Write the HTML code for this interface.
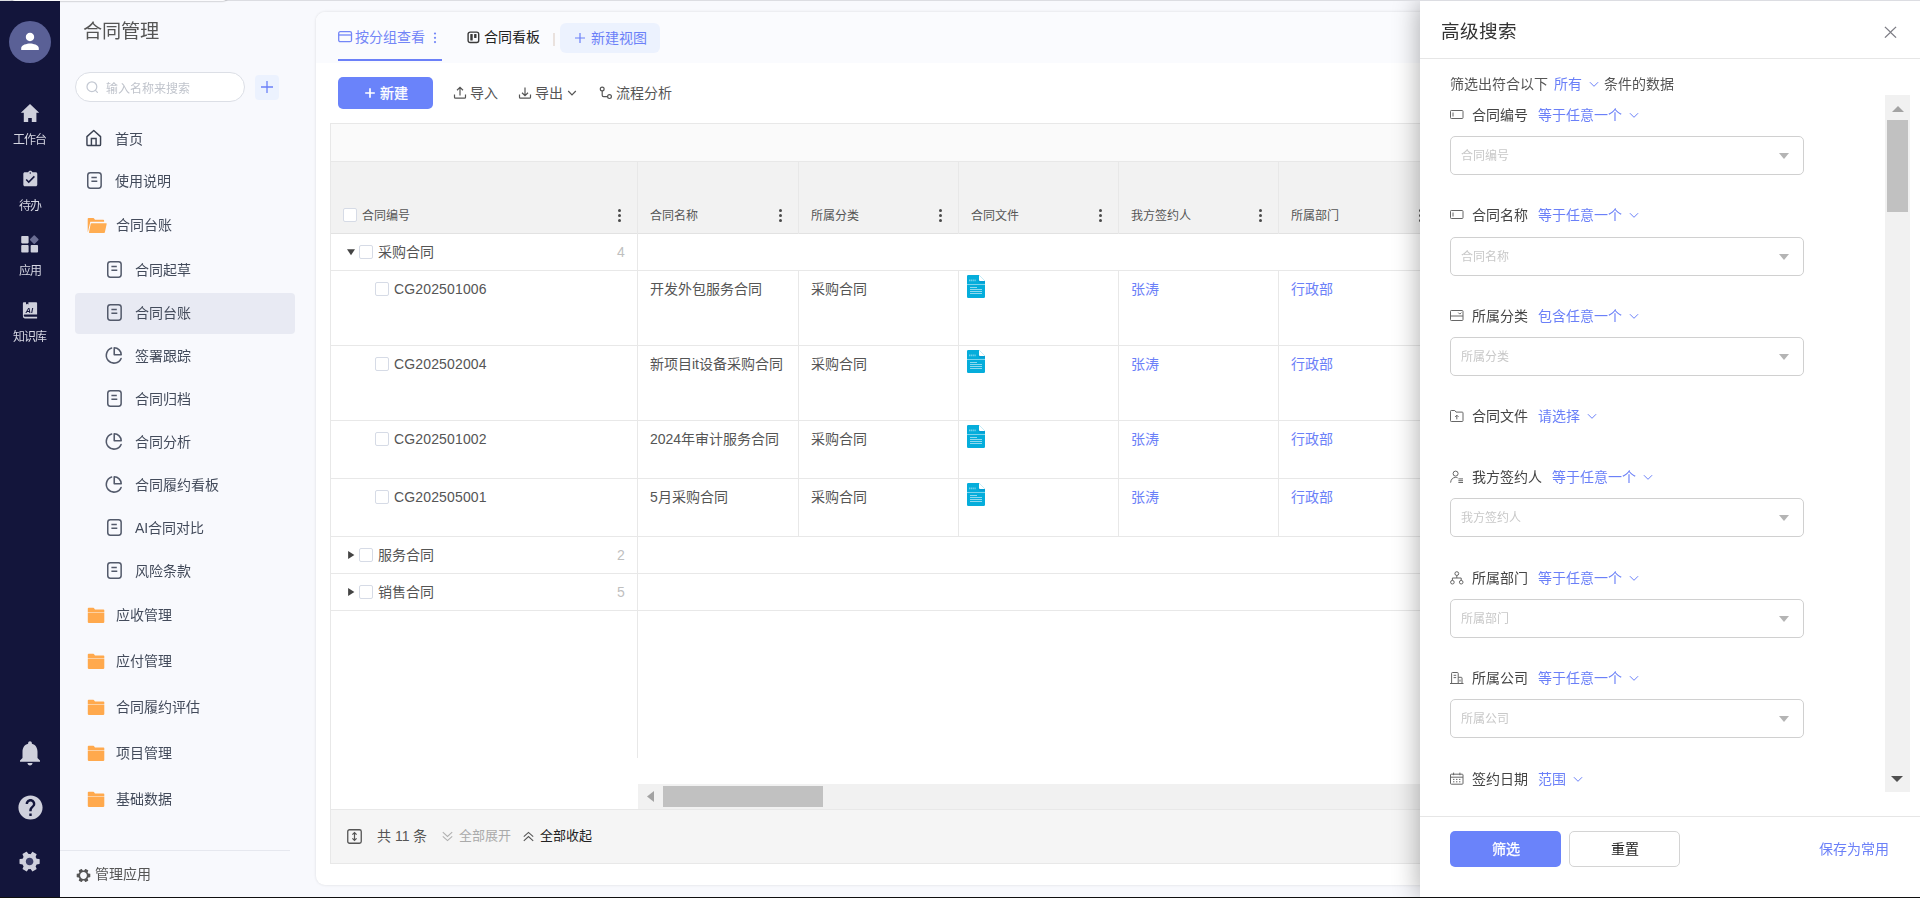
<!DOCTYPE html>
<html lang="zh-CN">
<head>
<meta charset="utf-8">
<title>合同管理</title>
<style>
*{box-sizing:border-box;margin:0;padding:0}
html,body{width:1920px;height:898px;overflow:hidden}
body{font-family:"Liberation Sans",sans-serif;font-size:14px;color:#555;background:#f8f9fd;position:relative}
.abs{position:absolute}
svg{display:block}
/* top / bottom chrome lines */
#topline{left:0;top:0;width:1920px;height:1px;background:#dcdde2}
#toptab{left:10px;top:-7px;width:218px;height:8px;background:#fbfbfd;border-radius:0 0 5px 5px;box-shadow:0 0 2px rgba(0,0,0,.45)}
#botline{left:0;top:897px;width:1920px;height:1px;background:#101010}
/* rail */
#rail,#side,#drawer{will-change:transform}
#rail{left:0;top:1px;width:60px;height:896px;background:#13153b}
#avatar{left:9px;top:20px;width:42px;height:42px;border-radius:50%;background:#5a6096}
.rl{left:-0.500px;width:60px;text-align:center;color:#d6d7e2;font-size:12px;line-height:14px;letter-spacing:-1px}
/* sidebar */
#side{left:60px;top:1px;width:250px;height:895px;background:#f8f9fd}
#stitle{left:83px;top:18px;font-size:19.2px;line-height:26px;color:#555}
#sbox{left:75px;top:72px;width:170px;height:30px;border:1px solid #dcdfe6;border-radius:15px;background:#fff}
#sbox span{position:absolute;left:30px;top:9px;font-size:12px;line-height:14px;color:#c0c4cc}
#splus{left:255px;top:75px;width:24px;height:25px;border-radius:4px;background:#ecf2fe}
.mi{left:15px;width:220px;height:40px;border-radius:4px}
.mi .t{position:absolute;top:12px;font-size:14px;line-height:16px;color:#434b5b;white-space:nowrap}
.mi svg{position:absolute}
.mi.sel{background:#e8eaf3;height:41px}
#sdiv{left:60px;top:850px;width:230px;height:1px;background:#e6e8ef}
#mgr{left:95px;top:866px;font-size:14px;line-height:16px;color:#555}
/* card */
#card{left:316px;top:12px;width:1620px;height:873px;background:#fff;border-radius:9px;box-shadow:0 0 3px rgba(0,0,0,.12)}
#tabs{left:0;top:0;width:100%;height:51px;background:#fafbfe;border-radius:9px 9px 0 0}

/* tabs */
.blue{color:#6b80f8}
#tab1{left:39px;top:17px;font-size:14px;line-height:16px;color:#7386f7;white-space:nowrap}
#tabul{left:22px;top:47px;width:104px;height:2px;background:#6b80f8}
#tab2{left:168px;top:17px;font-size:14px;line-height:16px;color:#222;white-space:nowrap}
#tsep{left:237px;top:21px;width:1.500px;height:13px;background:#eae2de}
#newview{left:244px;top:11px;width:100px;height:30px;border-radius:6px;background:#ecf2fe}
#newview span{position:absolute;left:31px;top:7px;font-size:14px;line-height:16px;color:#6b80f8;white-space:nowrap}
/* toolbar */
#btnnew{left:22px;top:65px;width:95px;height:32px;border-radius:5px;background:#6a83fa}
#btnnew span{position:absolute;left:42px;top:8px;font-size:14px;line-height:16px;color:#fff;white-space:nowrap;-webkit-text-stroke:.3px #fff}
.tb{top:73px;font-size:14px;line-height:16px;color:#555;white-space:nowrap}
/* table */
#tbl{left:14px;top:111px;width:1606px;height:741px;border-left:1px solid #e8e8e8;border-top:1px solid #e8e8e8;border-bottom:1px solid #e8e8e8;background:#fff}
#tband{left:0;top:0;width:100%;height:38px;background:#fafafa;border-bottom:1px solid #e8e8e8}
#thead{left:0;top:38px;width:100%;height:72px;background:#f2f2f2;border-bottom:1px solid #e2e2e2}
.hl{left:0;width:100%;height:1px;background:#e8e8e8}
.vl{top:38px;width:1px;background:#e8e8e8}
.th{top:85px;font-size:12px;line-height:14px;color:#555;white-space:nowrap}
.dots{top:85px;width:3px;height:13px}
.dots i{position:absolute;left:0;width:3px;height:3px;border-radius:50%;background:#4a4a4a}
.cb{width:14px;height:14px;border:1px solid #d6dbe6;border-radius:2px;background:#fff}
.td{font-size:14px;line-height:16px;color:#555;white-space:nowrap}
.lnk{color:#6b80f8}
.cnt{color:#bfbfbf}
#hscroll{left:307px;top:660px;width:1300px;height:25px;background:#f1f1f1}
#hthumb{left:25px;top:2px;width:160px;height:21px;background:#c1c1c1}
#tfoot{left:0;top:685px;width:100%;height:54px;background:#f5f5f5;border-top:1px solid #e8e8e8}

/* drawer */
#drawer{left:1420px;top:1px;width:500px;height:896px;background:#fff;box-shadow:-2px 0 24px rgba(0,0,0,.3)}
#dtitle{left:21px;top:19px;font-size:18.600px;line-height:24px;color:#333;white-space:nowrap}
#dhl{left:0;top:57px;width:100%;height:1px;background:#e6e6e6}
#dfl{left:0;top:815px;width:100%;height:1px;background:#e6e6e6}
.dt{font-size:14px;line-height:16px;white-space:nowrap;color:#555}
.dl{font-size:14px;line-height:16px;white-space:nowrap;color:#444}
.dinp{left:30px;width:354px;height:39px;border:1px solid #d0d0d0;border-radius:5px;background:#fff}
.dinp span{position:absolute;left:10px;top:12px;font-size:12px;line-height:14px;color:#c8c8c8;white-space:nowrap}
.dinp svg{position:absolute;left:328px;top:16px}
#vscroll{left:465px;top:94px;width:25px;height:697px;background:#f1f1f1}
#vthumb{left:2px;top:25px;width:21px;height:92px;background:#c1c1c1}
#bfilter{-webkit-text-stroke:.3px #fff;left:30px;top:830px;width:111px;height:36px;border-radius:5px;background:#6a83fa;color:#fff;font-size:14px;line-height:36px;text-align:center}
#breset{left:149px;top:830px;width:111px;height:36px;border-radius:5px;border:1px solid #d4d4d4;background:#fff;color:#222;font-size:14px;line-height:34px;text-align:center}
#bsave{left:399px;top:840px;font-size:14px;line-height:16px;color:#6b80f8;white-space:nowrap}
</style>
</head>
<body>
<div id="rail" class="abs">
<div id="avatar" class="abs"><svg class="abs" style="left:9px;top:9px" width="24" height="24" viewBox="0 0 24 24"><path fill="#fff" d="M12 11.2c2.3 0 4.2-1.9 4.2-4.2S14.300 2.800 12 2.800 7.800 4.700 7.800 7s1.900 4.200 4.200 4.200zm0 2.300c-2.900 0-8.800 1.500-8.800 4.400v2.100h17.600v-2.100c0-2.900-5.900-4.400-8.800-4.400z"/></svg></div>
<svg class="abs" style="left:20px;top:102px" width="20" height="20" viewBox="0 0 20 20"><path fill="#cfd0dc" d="M10 .9 19.200 9.700H16.400V19H11.800V15H8.200V19H3.800V9.700H.8z"/></svg>
<div class="rl abs" style="top:132px">工作台</div>
<svg class="abs" style="left:20.800px;top:168.800px" width="18.600" height="18.600" viewBox="0 0 24 24"><path fill="#cfd0dc" d="M19 3h-4.180C14.400 1.840 13.300 1 12 1c-1.300 0-2.400.840-2.820 2H5c-1.100 0-2 .900-2 2v14c0 1.100.900 2 2 2h14c1.100 0 2-.900 2-2V5c0-1.100-.900-2-2-2zm-7 0c.550 0 1 .450 1 1s-.450 1-1 1-1-.450-1-1 .450-1 1-1zm-2 14l-4-4 1.410-1.410L10 14.170l6.590-6.590L18 9l-8 8z"/></svg>
<div class="rl abs" style="top:198px">待办</div>
<svg class="abs" style="left:20px;top:233px" width="20.500" height="20.500" viewBox="0 0 20 20"><rect x="1.200" y="2" width="7.200" height="7.200" rx=".8" fill="#cfd0dc"/><rect x="1.200" y="10.800" width="7.200" height="7.200" rx=".8" fill="#cfd0dc"/><rect x="10.400" y="10.800" width="7.200" height="7.200" rx=".8" fill="#cfd0dc"/><rect x="10.700" y="2.300" width="6.400" height="6.400" rx=".8" transform="rotate(45 13.900 5.500)" fill="#6a6d92"/></svg>
<div class="rl abs" style="top:263px">应用</div>
<svg class="abs" style="left:22px;top:300px" width="16" height="19" viewBox="0 0 16 19"><path fill="#cfd0dc" d="M1.800 1.300H4V3.600L5.200 2.700 6.400 3.600V1.300H14.200a.9.900 0 0 1 .9.900V13.500H2.800a1.100 1.100 0 0 0 0 2.200H15.100V17.500H2.800A2.600 2.600 0 0 1 .9 14.900V2.200a.9.900 0 0 1 .9-.9z"/><text x="3.600" y="11.600" font-family="Liberation Sans, sans-serif" font-size="7.500" font-weight="bold" font-style="italic" fill="#13153b">AI</text></svg>
<div class="rl abs" style="top:329px">知识库</div>
<svg class="abs" style="left:15px;top:737px" width="30" height="30" viewBox="0 0 24 24"><path fill="#cfd0dc" d="M12 22c1.100 0 2-.900 2-2h-4c0 1.100.890 2 2 2zm6-6v-5c0-3.070-1.640-5.640-4.500-6.320V4c0-.830-.670-1.500-1.500-1.500s-1.500.670-1.500 1.500v.680C7.630 5.360 6 7.920 6 11v5l-2 2v1h16v-1l-2-2z"/></svg>
<svg class="abs" style="left:15.500px;top:792px" width="29" height="29" viewBox="0 0 24 24"><path fill="#cfd0dc" d="M12 2C6.480 2 2 6.480 2 12s4.480 10 10 10 10-4.480 10-10S17.520 2 12 2zm1 17h-2v-2h2v2zm2.070-7.750l-.900.920C13.450 12.900 13 13.500 13 15h-2v-.500c0-1.100.450-2.100 1.170-2.830l1.240-1.260c.370-.360.590-.860.590-1.410 0-1.100-.900-2-2-2s-2 .900-2 2H8c0-2.210 1.790-4 4-4s4 1.790 4 4c0 .880-.360 1.680-.930 2.250z"/></svg>
<svg class="abs" style="left:17px;top:848.300px" width="25.200" height="25.200" viewBox="0 0 24 24"><circle cx="12" cy="12" r="4" fill="#3a3d66"/><path fill="#cfd0dc" transform="rotate(90 12 12)" d="M19.140 12.940c.040-.300.060-.610.060-.940 0-.320-.020-.640-.070-.940l2.030-1.580c.180-.140.230-.410.120-.610l-1.920-3.320c-.120-.220-.370-.290-.590-.220l-2.390.960c-.500-.380-1.030-.700-1.620-.940l-.360-2.540c-.040-.240-.240-.410-.480-.410h-3.840c-.240 0-.430.170-.470.410l-.360 2.540c-.590.240-1.130.570-1.620.940l-2.390-.960c-.220-.080-.470 0-.590.220L2.740 8.870c-.120.210-.080.470.120.610l2.030 1.580c-.050.300-.090.630-.090.940s.020.640.070.940l-2.030 1.580c-.180.140-.230.410-.120.610l1.920 3.320c.120.220.370.290.590.220l2.390-.960c.500.380 1.030.700 1.620.940l.360 2.540c.050.240.240.410.480.410h3.840c.240 0 .440-.170.470-.410l.360-2.540c.590-.240 1.130-.560 1.620-.940l2.390.960c.220.080.470 0 .590-.220l1.920-3.320c.120-.220.070-.470-.120-.610l-2.010-1.580zM12 15.600c-1.980 0-3.600-1.620-3.600-3.600s1.620-3.600 3.600-3.600 3.600 1.620 3.600 3.600-1.620 3.600-3.600 3.600z"/></svg>
</div>
<div id="side" class="abs">
<div id="stitle" class="abs" style="left:23px;top:18px">合同管理</div>
<div id="sbox" class="abs" style="left:15px;top:71px"><svg class="abs" style="left:9px;top:7px" width="15" height="15" viewBox="0 0 15 15"><circle cx="6.900" cy="6.700" r="4.900" fill="none" stroke="#c3c8d2" stroke-width="1.200"/><path d="M10.500 10.400 12.400 12.300" stroke="#c3c8d2" stroke-width="1.200" stroke-linecap="round"/></svg><span>输入名称来搜索</span></div>
<div id="splus" class="abs" style="left:195px;top:74px"><svg class="abs" style="left:5px;top:5px" width="14" height="14" viewBox="0 0 14 14"><path d="M1 7H13M7 1V13" stroke="#6b80f8" stroke-width="1.300" fill="none"/></svg></div>
<div class="mi abs" style="top:118px"><svg style="left:10px;top:10px" width="17.500" height="18.500" viewBox="0 0 18 19"><path d="M2 7.800 9 1.600 16 7.800V15.800a1.200 1.200 0 0 1-1.200 1.200H3.200A1.200 1.200 0 0 1 2 15.800z" fill="none" stroke="#3c4353" stroke-width="1.500" stroke-linejoin="round"/><path d="M6.600 17V9.800H11.400V17" fill="none" stroke="#3c4353" stroke-width="1.500"/></svg><span class="t" style="left:40px">首页</span></div>
<div class="mi abs" style="top:160px"><svg style="left:11px;top:10px" width="17" height="19" viewBox="0 0 17 19"><rect x="1.750" y="1.750" width="13.400" height="15.400" rx="2.600" fill="none" stroke="#535a6b" stroke-width="1.500"/><path d="M5.400 6.600H10.800M5.400 10.300H11.300" stroke="#535a6b" stroke-width="1.500" fill="none"/></svg><span class="t" style="left:40px">使用说明</span></div>
<div class="mi abs" style="top:204px"><svg style="left:11px;top:11px" width="22" height="18" viewBox="0 0 22 18"><path d="M1.700 2.700a.8.800 0 0 1 .8-.8H7.300a.8.800 0 0 1 .6.300L9 3.700H17.300a.8.800 0 0 1 .8.800V5.700H4.300L1.900 16.200 1.700 15z" fill="#ffa94d"/><path d="M5.300 7.200H20.200a.5.500 0 0 1 .5.600L18.900 16.300a.8.800 0 0 1-.8.600H3.500a.5.500 0 0 1-.5-.6L4.700 7.700a.6.600 0 0 1 .6-.5z" fill="#ffad52"/></svg><span class="t" style="left:41px">合同台账</span></div>
<div class="mi abs" style="top:249px"><svg style="left:31px;top:10px" width="17" height="19" viewBox="0 0 17 19"><rect x="1.750" y="1.750" width="13.400" height="15.400" rx="2.600" fill="none" stroke="#535a6b" stroke-width="1.500"/><path d="M5.400 6.600H10.800M5.400 10.300H11.300" stroke="#535a6b" stroke-width="1.500" fill="none"/></svg><span class="t" style="left:60px">合同起草</span></div>
<div class="mi abs sel" style="top:292px"><svg style="left:31px;top:10px" width="17" height="19" viewBox="0 0 17 19"><rect x="1.750" y="1.750" width="13.400" height="15.400" rx="2.600" fill="none" stroke="#535a6b" stroke-width="1.500"/><path d="M5.400 6.600H10.800M5.400 10.300H11.300" stroke="#535a6b" stroke-width="1.500" fill="none"/></svg><span class="t" style="left:60px">合同台账</span></div>
<div class="mi abs" style="top:335px"><svg style="left:28.500px;top:9.500px" width="19" height="19" viewBox="0 0 18 18"><path d="M16.200 11.800A7.300 7.300 0 1 1 7.200 2.000" fill="none" stroke="#535a6b" stroke-width="1.500" stroke-linecap="round"/><path d="M9.700 1.700A6.600 6.600 0 0 1 16.300 8.300H9.700z" fill="none" stroke="#535a6b" stroke-width="1.500" stroke-linejoin="round"/></svg><span class="t" style="left:60px">签署跟踪</span></div>
<div class="mi abs" style="top:378px"><svg style="left:31px;top:10px" width="17" height="19" viewBox="0 0 17 19"><rect x="1.750" y="1.750" width="13.400" height="15.400" rx="2.600" fill="none" stroke="#535a6b" stroke-width="1.500"/><path d="M5.400 6.600H10.800M5.400 10.300H11.300" stroke="#535a6b" stroke-width="1.500" fill="none"/></svg><span class="t" style="left:60px">合同归档</span></div>
<div class="mi abs" style="top:421px"><svg style="left:28.500px;top:9.500px" width="19" height="19" viewBox="0 0 18 18"><path d="M16.200 11.800A7.300 7.300 0 1 1 7.200 2.000" fill="none" stroke="#535a6b" stroke-width="1.500" stroke-linecap="round"/><path d="M9.700 1.700A6.600 6.600 0 0 1 16.300 8.300H9.700z" fill="none" stroke="#535a6b" stroke-width="1.500" stroke-linejoin="round"/></svg><span class="t" style="left:60px">合同分析</span></div>
<div class="mi abs" style="top:464px"><svg style="left:28.500px;top:9.500px" width="19" height="19" viewBox="0 0 18 18"><path d="M16.200 11.800A7.300 7.300 0 1 1 7.200 2.000" fill="none" stroke="#535a6b" stroke-width="1.500" stroke-linecap="round"/><path d="M9.700 1.700A6.600 6.600 0 0 1 16.300 8.300H9.700z" fill="none" stroke="#535a6b" stroke-width="1.500" stroke-linejoin="round"/></svg><span class="t" style="left:60px">合同履约看板</span></div>
<div class="mi abs" style="top:507px"><svg style="left:31px;top:10px" width="17" height="19" viewBox="0 0 17 19"><rect x="1.750" y="1.750" width="13.400" height="15.400" rx="2.600" fill="none" stroke="#535a6b" stroke-width="1.500"/><path d="M5.400 6.600H10.800M5.400 10.300H11.300" stroke="#535a6b" stroke-width="1.500" fill="none"/></svg><span class="t" style="left:60px">AI合同对比</span></div>
<div class="mi abs" style="top:550px"><svg style="left:31px;top:10px" width="17" height="19" viewBox="0 0 17 19"><rect x="1.750" y="1.750" width="13.400" height="15.400" rx="2.600" fill="none" stroke="#535a6b" stroke-width="1.500"/><path d="M5.400 6.600H10.800M5.400 10.300H11.300" stroke="#535a6b" stroke-width="1.500" fill="none"/></svg><span class="t" style="left:60px">风险条款</span></div>
<div class="mi abs" style="top:594px"><svg style="left:12px;top:12px" width="18" height="17" viewBox="0 0 18 17"><path d="M.8 1.600a.8.800 0 0 1 .8-.8H6.300a.8.800 0 0 1 .6.300L8 2.500H16.500a.8.800 0 0 1 .8.800V5H.8z" fill="#ffa94d"/><path d="M.8 5.600H17.300V15.100a.8.800 0 0 1-.8.800H1.600a.8.800 0 0 1-.8-.8z" fill="#ffa94d"/></svg><span class="t" style="left:41px">应收管理</span></div>
<div class="mi abs" style="top:640px"><svg style="left:12px;top:12px" width="18" height="17" viewBox="0 0 18 17"><path d="M.8 1.600a.8.800 0 0 1 .8-.8H6.300a.8.800 0 0 1 .6.300L8 2.500H16.500a.8.800 0 0 1 .8.800V5H.8z" fill="#ffa94d"/><path d="M.8 5.600H17.300V15.100a.8.800 0 0 1-.8.800H1.600a.8.800 0 0 1-.8-.8z" fill="#ffa94d"/></svg><span class="t" style="left:41px">应付管理</span></div>
<div class="mi abs" style="top:686px"><svg style="left:12px;top:12px" width="18" height="17" viewBox="0 0 18 17"><path d="M.8 1.600a.8.800 0 0 1 .8-.8H6.300a.8.800 0 0 1 .6.300L8 2.500H16.500a.8.800 0 0 1 .8.800V5H.8z" fill="#ffa94d"/><path d="M.8 5.600H17.300V15.100a.8.800 0 0 1-.8.800H1.600a.8.800 0 0 1-.8-.8z" fill="#ffa94d"/></svg><span class="t" style="left:41px">合同履约评估</span></div>
<div class="mi abs" style="top:732px"><svg style="left:12px;top:12px" width="18" height="17" viewBox="0 0 18 17"><path d="M.8 1.600a.8.800 0 0 1 .8-.8H6.300a.8.800 0 0 1 .6.300L8 2.500H16.500a.8.800 0 0 1 .8.800V5H.8z" fill="#ffa94d"/><path d="M.8 5.600H17.300V15.100a.8.800 0 0 1-.8.800H1.600a.8.800 0 0 1-.8-.8z" fill="#ffa94d"/></svg><span class="t" style="left:41px">项目管理</span></div>
<div class="mi abs" style="top:778px"><svg style="left:12px;top:12px" width="18" height="17" viewBox="0 0 18 17"><path d="M.8 1.600a.8.800 0 0 1 .8-.8H6.300a.8.800 0 0 1 .6.300L8 2.500H16.500a.8.800 0 0 1 .8.800V5H.8z" fill="#ffa94d"/><path d="M.8 5.600H17.300V15.100a.8.800 0 0 1-.8.800H1.600a.8.800 0 0 1-.8-.8z" fill="#ffa94d"/></svg><span class="t" style="left:41px">基础数据</span></div>
<div id="sdiv" class="abs" style="left:0;top:849px"></div>
<svg class="abs" style="left:14.500px;top:865.500px" width="17" height="17" viewBox="0 0 24 24"><path fill="#555" transform="rotate(90 12 12)" d="M19.140 12.940c.040-.300.060-.610.060-.940 0-.320-.020-.640-.070-.940l2.030-1.580c.180-.140.230-.410.120-.610l-1.920-3.320c-.120-.220-.370-.290-.590-.220l-2.390.960c-.500-.380-1.030-.700-1.620-.940l-.360-2.540c-.040-.240-.240-.410-.480-.410h-3.840c-.240 0-.430.170-.470.410l-.360 2.540c-.590.240-1.130.570-1.620.940l-2.390-.960c-.220-.080-.470 0-.590.220L2.740 8.870c-.120.210-.080.470.120.610l2.030 1.580c-.050.300-.090.630-.090.940s.020.640.070.940l-2.030 1.580c-.180.140-.230.410-.120.610l1.920 3.320c.120.220.370.290.590.220l2.390-.960c.500.380 1.030.700 1.620.940l.360 2.540c.050.240.240.410.480.410h3.840c.240 0 .440-.170.470-.410l.360-2.540c.590-.240 1.130-.560 1.620-.940l2.390.960c.220.080.470 0 .590-.220l1.920-3.320c.120-.220.070-.470-.120-.610l-2.010-1.580zM12 16.800c-2.650 0-4.800-2.150-4.800-4.800s2.150-4.800 4.800-4.800 4.800 2.150 4.800 4.800-2.150 4.800-4.800 4.800z"/></svg>
<div id="mgr" class="abs" style="left:35px;top:865px">管理应用</div>
</div>
<div id="card" class="abs"><div id="tabs" class="abs">
<svg class="abs" style="left:22px;top:19px" width="15" height="12" viewBox="0 0 15 12"><rect x=".7" y=".7" width="12.800" height="10" rx="1.500" fill="none" stroke="#7386f7" stroke-width="1.300"/><path d="M.7 4H13.500" stroke="#7386f7" stroke-width="1.300"/></svg>
<div id="tab1" class="abs">按分组查看</div>
<svg class="abs" style="left:117px;top:20px" width="4" height="12" viewBox="0 0 4 12"><circle cx="2" cy="1.500" r="1.100" fill="#7386f7"/><circle cx="2" cy="5.800" r="1.100" fill="#7386f7"/><circle cx="2" cy="10.100" r="1.100" fill="#7386f7"/></svg>
<div id="tabul" class="abs"></div>
<svg class="abs" style="left:150.500px;top:18.500px" width="13" height="13" viewBox="0 0 13 13"><rect x="1.100" y="1.100" width="10.600" height="10.400" rx="2" fill="none" stroke="#3a3a3a" stroke-width="1.400"/><rect x="3.300" y="3" width="2.400" height="6.600" rx=".5" fill="#3a3a3a"/><rect x="7.100" y="3" width="2.400" height="4" rx=".5" fill="#3a3a3a"/></svg>
<div id="tab2" class="abs">合同看板</div>
<div id="tsep" class="abs"></div>
<div id="newview" class="abs"><svg class="abs" style="left:14px;top:9px" width="12" height="12" viewBox="0 0 12 12"><path d="M1 6H11M6 1V11" stroke="#6b80f8" stroke-width="1.200"/></svg><span>新建视图</span></div>
</div>
<div id="btnnew" class="abs"><svg class="abs" style="left:27px;top:11px" width="10" height="10" viewBox="0 0 10 10"><path d="M.2 5H9.800M5 .2V9.800" stroke="#fff" stroke-width="1.700"/></svg><span>新建</span></div>
<svg class="abs" style="left:137px;top:74px" width="14" height="14" viewBox="0 0 14 14"><path d="M1.500 8.500V11.200a1 1 0 0 0 1 1H11.500a1 1 0 0 0 1-1V8.500M7 9.500V1.500M4 4.300 7 1.400 10 4.300" fill="none" stroke="#555" stroke-width="1.200"/></svg>
<div class="tb abs" style="left:154px">导入</div>
<svg class="abs" style="left:202px;top:74px" width="14" height="14" viewBox="0 0 14 14"><path d="M1.500 8.500V11.200a1 1 0 0 0 1 1H11.500a1 1 0 0 0 1-1V8.500M7 1.500V9.500M4 6.700 7 9.600 10 6.700" fill="none" stroke="#555" stroke-width="1.200"/></svg>
<div class="tb abs" style="left:219px">导出</div>
<svg class="abs" style="left:251px;top:77px" width="10" height="8" viewBox="0 0 10 8"><path d="M1.200 2 5 5.800 8.800 2" fill="none" stroke="#555" stroke-width="1.200"/></svg>
<svg class="abs" style="left:283px;top:74px" width="14" height="14" viewBox="0 0 14 14"><circle cx="3.200" cy="3" r="1.900" fill="none" stroke="#555" stroke-width="1.200"/><circle cx="10.500" cy="10.600" r="1.900" fill="none" stroke="#555" stroke-width="1.200"/><path d="M3.200 5V9.200a1.400 1.400 0 0 0 1.400 1.400H8.600" fill="none" stroke="#555" stroke-width="1.200"/></svg>
<div class="tb abs" style="left:300px">流程分析</div>
<div id="tbl" class="abs">
<div id="tband" class="abs"></div><div id="thead" class="abs"></div>
<div class="vl abs" style="left:306px;height:596px"></div>
<div class="vl abs" style="left:467px;height:72px"></div><div class="vl abs" style="left:467px;top:147px;height:266px"></div>
<div class="vl abs" style="left:627px;height:72px"></div><div class="vl abs" style="left:627px;top:147px;height:266px"></div>
<div class="vl abs" style="left:787px;height:72px"></div><div class="vl abs" style="left:787px;top:147px;height:266px"></div>
<div class="vl abs" style="left:947px;height:72px"></div><div class="vl abs" style="left:947px;top:147px;height:266px"></div>
<div class="vl abs" style="left:1107px;height:72px"></div><div class="vl abs" style="left:1107px;top:147px;height:266px"></div>
<div class="cb abs" style="left:12px;top:84px"></div>
<div class="th abs" style="left:31px">合同编号</div>
<div class="th abs" style="left:319px">合同名称</div>
<div class="th abs" style="left:480px">所属分类</div>
<div class="th abs" style="left:640px">合同文件</div>
<div class="th abs" style="left:800px">我方签约人</div>
<div class="th abs" style="left:960px">所属部门</div>
<div class="dots abs" style="left:287px"><i style="top:0"></i><i style="top:5px"></i><i style="top:10px"></i></div>
<div class="dots abs" style="left:448px"><i style="top:0"></i><i style="top:5px"></i><i style="top:10px"></i></div>
<div class="dots abs" style="left:608px"><i style="top:0"></i><i style="top:5px"></i><i style="top:10px"></i></div>
<div class="dots abs" style="left:768px"><i style="top:0"></i><i style="top:5px"></i><i style="top:10px"></i></div>
<div class="dots abs" style="left:928px"><i style="top:0"></i><i style="top:5px"></i><i style="top:10px"></i></div>
<div class="dots abs" style="left:1088px"><i style="top:0"></i><i style="top:5px"></i><i style="top:10px"></i></div>
<div class="hl abs" style="top:146px"></div>
<div class="hl abs" style="top:221px"></div>
<div class="hl abs" style="top:296px"></div>
<div class="hl abs" style="top:354px"></div>
<div class="hl abs" style="top:412px"></div>
<div class="hl abs" style="top:449px"></div>
<div class="hl abs" style="top:486px"></div>
<svg class="abs" style="left:16px;top:125px" width="8" height="6.500" viewBox="0 0 9 7"><path d="M0 0H9L4.500 7z" fill="#444"/></svg><div class="cb abs" style="left:28px;top:121px"></div><div class="td abs" style="left:47px;top:120px">采购合同</div><div class="td cnt abs" style="left:286px;top:120px">4</div>
<svg class="abs" style="left:17px;top:427px" width="6.500" height="8" viewBox="0 0 7 9"><path d="M0 0V9L7 4.500z" fill="#444"/></svg><div class="cb abs" style="left:28px;top:424px"></div><div class="td abs" style="left:47px;top:423px">服务合同</div><div class="td cnt abs" style="left:286px;top:423px">2</div>
<svg class="abs" style="left:17px;top:464px" width="6.500" height="8" viewBox="0 0 7 9"><path d="M0 0V9L7 4.500z" fill="#444"/></svg><div class="cb abs" style="left:28px;top:461px"></div><div class="td abs" style="left:47px;top:460px">销售合同</div><div class="td cnt abs" style="left:286px;top:460px">5</div>
<div class="cb abs" style="left:44px;top:158px"></div>
<div class="td abs" style="left:63px;top:157px;letter-spacing:.15px">CG202501006</div>
<div class="td abs" style="left:319px;top:157px">开发外包服务合同</div>
<div class="td abs" style="left:480px;top:157px">采购合同</div>
<svg class="abs" style="left:636px;top:151px" width="18" height="23" viewBox="0 0 18 23"><path d="M1.300 0H12L18 6V21.700a1.300 1.300 0 0 1-1.300 1.300H1.300A1.300 1.300 0 0 1 0 21.700V1.300A1.300 1.300 0 0 1 1.300 0z" fill="#05addb"/><path d="M11.600 5.200a1.200 1.200 0 0 0 1.200 1.200H18V7.600H12.800L11 5.800z" fill="#0a7dc2" opacity=".55"/><path d="M12 0 18 6H13a1 1 0 0 1-1-1z" fill="#fff"/><rect x="0" y="9" width="18" height="1" fill="#7dd4ed"/><rect x="3" y="12" width="7" height="1" fill="#8fd9ef"/><rect x="3" y="14" width="12" height="1" fill="#8fd9ef"/><rect x="3" y="16" width="12" height="1" fill="#8fd9ef"/><rect x="3" y="18" width="12" height="1" fill="#8fd9ef"/><path d="M2 5.400H9" stroke="#6fd0ea" stroke-width="1.600" stroke-dasharray="1.300 .5"/></svg>
<div class="td lnk abs" style="left:800px;top:157px">张涛</div>
<div class="td lnk abs" style="left:960px;top:157px">行政部</div>
<div class="cb abs" style="left:44px;top:233px"></div>
<div class="td abs" style="left:63px;top:232px;letter-spacing:.15px">CG202502004</div>
<div class="td abs" style="left:319px;top:232px">新项目it设备采购合同</div>
<div class="td abs" style="left:480px;top:232px">采购合同</div>
<svg class="abs" style="left:636px;top:226px" width="18" height="23" viewBox="0 0 18 23"><path d="M1.300 0H12L18 6V21.700a1.300 1.300 0 0 1-1.300 1.300H1.300A1.300 1.300 0 0 1 0 21.700V1.300A1.300 1.300 0 0 1 1.300 0z" fill="#05addb"/><path d="M11.600 5.200a1.200 1.200 0 0 0 1.200 1.200H18V7.600H12.800L11 5.800z" fill="#0a7dc2" opacity=".55"/><path d="M12 0 18 6H13a1 1 0 0 1-1-1z" fill="#fff"/><rect x="0" y="9" width="18" height="1" fill="#7dd4ed"/><rect x="3" y="12" width="7" height="1" fill="#8fd9ef"/><rect x="3" y="14" width="12" height="1" fill="#8fd9ef"/><rect x="3" y="16" width="12" height="1" fill="#8fd9ef"/><rect x="3" y="18" width="12" height="1" fill="#8fd9ef"/><path d="M2 5.400H9" stroke="#6fd0ea" stroke-width="1.600" stroke-dasharray="1.300 .5"/></svg>
<div class="td lnk abs" style="left:800px;top:232px">张涛</div>
<div class="td lnk abs" style="left:960px;top:232px">行政部</div>
<div class="cb abs" style="left:44px;top:308px"></div>
<div class="td abs" style="left:63px;top:307px;letter-spacing:.15px">CG202501002</div>
<div class="td abs" style="left:319px;top:307px">2024年审计服务合同</div>
<div class="td abs" style="left:480px;top:307px">采购合同</div>
<svg class="abs" style="left:636px;top:301px" width="18" height="23" viewBox="0 0 18 23"><path d="M1.300 0H12L18 6V21.700a1.300 1.300 0 0 1-1.300 1.300H1.300A1.300 1.300 0 0 1 0 21.700V1.300A1.300 1.300 0 0 1 1.300 0z" fill="#05addb"/><path d="M11.600 5.200a1.200 1.200 0 0 0 1.200 1.200H18V7.600H12.800L11 5.800z" fill="#0a7dc2" opacity=".55"/><path d="M12 0 18 6H13a1 1 0 0 1-1-1z" fill="#fff"/><rect x="0" y="9" width="18" height="1" fill="#7dd4ed"/><rect x="3" y="12" width="7" height="1" fill="#8fd9ef"/><rect x="3" y="14" width="12" height="1" fill="#8fd9ef"/><rect x="3" y="16" width="12" height="1" fill="#8fd9ef"/><rect x="3" y="18" width="12" height="1" fill="#8fd9ef"/><path d="M2 5.400H9" stroke="#6fd0ea" stroke-width="1.600" stroke-dasharray="1.300 .5"/></svg>
<div class="td lnk abs" style="left:800px;top:307px">张涛</div>
<div class="td lnk abs" style="left:960px;top:307px">行政部</div>
<div class="cb abs" style="left:44px;top:366px"></div>
<div class="td abs" style="left:63px;top:365px;letter-spacing:.15px">CG202505001</div>
<div class="td abs" style="left:319px;top:365px">5月采购合同</div>
<div class="td abs" style="left:480px;top:365px">采购合同</div>
<svg class="abs" style="left:636px;top:359px" width="18" height="23" viewBox="0 0 18 23"><path d="M1.300 0H12L18 6V21.700a1.300 1.300 0 0 1-1.300 1.300H1.300A1.300 1.300 0 0 1 0 21.700V1.300A1.300 1.300 0 0 1 1.300 0z" fill="#05addb"/><path d="M11.600 5.200a1.200 1.200 0 0 0 1.200 1.200H18V7.600H12.800L11 5.800z" fill="#0a7dc2" opacity=".55"/><path d="M12 0 18 6H13a1 1 0 0 1-1-1z" fill="#fff"/><rect x="0" y="9" width="18" height="1" fill="#7dd4ed"/><rect x="3" y="12" width="7" height="1" fill="#8fd9ef"/><rect x="3" y="14" width="12" height="1" fill="#8fd9ef"/><rect x="3" y="16" width="12" height="1" fill="#8fd9ef"/><rect x="3" y="18" width="12" height="1" fill="#8fd9ef"/><path d="M2 5.400H9" stroke="#6fd0ea" stroke-width="1.600" stroke-dasharray="1.300 .5"/></svg>
<div class="td lnk abs" style="left:800px;top:365px">张涛</div>
<div class="td lnk abs" style="left:960px;top:365px">行政部</div>
<div id="hscroll" class="abs"><svg class="abs" style="left:9px;top:7px" width="7" height="11" viewBox="0 0 7 11"><path d="M7 0V11L0 5.500z" fill="#a3a3a3"/></svg><div id="hthumb" class="abs"></div></div>
<div id="tfoot" class="abs">
<svg class="abs" style="left:16px;top:19px" width="16" height="16" viewBox="0 0 16 16"><rect x=".75" y=".75" width="13.500" height="13.500" rx="1.800" fill="none" stroke="#555" stroke-width="1.300"/><path d="M7.500 3.600V11.400M5.400 5.600 7.500 3.500 9.600 5.600M5.400 9.400 7.500 11.500 9.600 9.400" fill="none" stroke="#555" stroke-width="1.200"/></svg>
<div class="td abs" style="left:46px;top:18px">共 11 条</div>
<svg class="abs" style="left:111px;top:21px" width="11" height="11" viewBox="0 0 11 11"><path d="M.800 1.200 5.500 5.400 10.200 1.200M.800 5.400 5.500 9.600 10.200 5.400" fill="none" stroke="#b0b0b0" stroke-width="1.100"/></svg>
<div class="abs" style="left:128px;top:18px;font-size:13px;line-height:16px;color:#aaa;white-space:nowrap">全部展开</div>
<svg class="abs" style="left:192px;top:21px" width="11" height="11" viewBox="0 0 11 11"><path d="M.800 5.600 5.500 1.400 10.200 5.600M.800 9.800 5.500 5.600 10.200 9.800" fill="none" stroke="#555" stroke-width="1.100"/></svg>
<div class="abs" style="left:209px;top:18px;font-size:13px;line-height:16px;color:#222;white-space:nowrap">全部收起</div>
</div>
</div>
</div>
<div id="drawer" class="abs">
<div id="dtitle" class="abs">高级搜索</div>
<svg class="abs" style="left:463.500px;top:24.500px" width="13" height="12.500" viewBox="0 0 14 14" preserveAspectRatio="none"><path d="M1 1 13 13M13 1 1 13" stroke="#7c7c84" stroke-width="1.400"/></svg>
<div id="dhl" class="abs"></div>
<div class="dt abs" style="left:30px;top:75px">筛选出符合以下</div>
<div class="dt abs" style="left:134px;top:75px;color:#6b80f8">所有</div>
<svg class="abs" style="left:169px;top:80px" width="10" height="7" viewBox="0 0 10 7"><path d="M.9 1.200 5 5.300 9.100 1.200" fill="none" stroke="#6b80f8" stroke-width="1"/></svg>
<div class="dt abs" style="left:184px;top:75px">条件的数据</div>
<svg class="abs" style="left:30px;top:107px" width="14" height="14" viewBox="0 0 14 14"><rect x=".5" y="2.500" width="12.500" height="8" rx=".8" fill="none" stroke="#666" stroke-width="1"/><path d="M3 4.500V8.500" stroke="#666" stroke-width="1"/></svg>
<div class="dl abs" style="left:52px;top:106px">合同编号</div>
<div class="dt abs" style="left:118px;top:106px;color:#6b80f8">等于任意一个</div>
<svg class="abs" style="left:209px;top:111px" width="10" height="7" viewBox="0 0 10 7"><path d="M.9 1.200 5 5.300 9.100 1.200" fill="none" stroke="#6b80f8" stroke-width="1"/></svg>
<div class="dinp abs" style="top:135px"><span>合同编号</span><svg width="10" height="6" viewBox="0 0 10 6"><path d="M0 0H10L5 6z" fill="#b4b4b4"/></svg></div>
<svg class="abs" style="left:30px;top:207px" width="14" height="14" viewBox="0 0 14 14"><rect x=".5" y="2.500" width="12.500" height="8" rx=".8" fill="none" stroke="#666" stroke-width="1"/><path d="M3 4.500V8.500" stroke="#666" stroke-width="1"/></svg>
<div class="dl abs" style="left:52px;top:206px">合同名称</div>
<div class="dt abs" style="left:118px;top:206px;color:#6b80f8">等于任意一个</div>
<svg class="abs" style="left:209px;top:211px" width="10" height="7" viewBox="0 0 10 7"><path d="M.9 1.200 5 5.300 9.100 1.200" fill="none" stroke="#6b80f8" stroke-width="1"/></svg>
<div class="dinp abs" style="top:236px"><span>合同名称</span><svg width="10" height="6" viewBox="0 0 10 6"><path d="M0 0H10L5 6z" fill="#b4b4b4"/></svg></div>
<svg class="abs" style="left:30px;top:308px" width="14" height="14" viewBox="0 0 14 14"><rect x=".5" y="1.500" width="12.500" height="10" rx=".8" fill="none" stroke="#666" stroke-width="1"/><path d="M.5 7H13M8.300 3.600 9.800 5.100 11.300 3.600" fill="none" stroke="#666" stroke-width="1"/></svg>
<div class="dl abs" style="left:52px;top:307px">所属分类</div>
<div class="dt abs" style="left:118px;top:307px;color:#6b80f8">包含任意一个</div>
<svg class="abs" style="left:209px;top:312px" width="10" height="7" viewBox="0 0 10 7"><path d="M.9 1.200 5 5.300 9.100 1.200" fill="none" stroke="#6b80f8" stroke-width="1"/></svg>
<div class="dinp abs" style="top:336px"><span>所属分类</span><svg width="10" height="6" viewBox="0 0 10 6"><path d="M0 0H10L5 6z" fill="#b4b4b4"/></svg></div>
<svg class="abs" style="left:30px;top:408px" width="14" height="14" viewBox="0 0 14 14"><path d="M.5 2.300a.8.800 0 0 1 .8-.8H4.800L6 3.100H12.200a.8.800 0 0 1 .8.800V11.700a.8.800 0 0 1-.8.800H1.300a.8.800 0 0 1-.8-.8z" fill="none" stroke="#666" stroke-width="1"/><path d="M6.800 10.400V6.300M5.100 7.900 6.800 6.200 8.500 7.900" fill="none" stroke="#666" stroke-width="1"/></svg>
<div class="dl abs" style="left:52px;top:407px">合同文件</div>
<div class="dt abs" style="left:118px;top:407px;color:#6b80f8">请选择</div>
<svg class="abs" style="left:167px;top:412px" width="10" height="7" viewBox="0 0 10 7"><path d="M.9 1.200 5 5.300 9.100 1.200" fill="none" stroke="#6b80f8" stroke-width="1"/></svg>
<svg class="abs" style="left:30px;top:469px" width="14" height="14" viewBox="0 0 14 14"><circle cx="5.600" cy="3.600" r="2.500" fill="none" stroke="#666" stroke-width="1"/><path d="M.6 12.600C.9 9.400 2.800 7.400 5.600 7.400c.8 0 1.500.2 2 .4M8.400 8.900H13M8.400 10.700H13M8.400 12.500H13" fill="none" stroke="#666" stroke-width="1"/></svg>
<div class="dl abs" style="left:52px;top:468px">我方签约人</div>
<div class="dt abs" style="left:132px;top:468px;color:#6b80f8">等于任意一个</div>
<svg class="abs" style="left:223px;top:473px" width="10" height="7" viewBox="0 0 10 7"><path d="M.9 1.200 5 5.300 9.100 1.200" fill="none" stroke="#6b80f8" stroke-width="1"/></svg>
<div class="dinp abs" style="top:497px"><span>我方签约人</span><svg width="10" height="6" viewBox="0 0 10 6"><path d="M0 0H10L5 6z" fill="#b4b4b4"/></svg></div>
<svg class="abs" style="left:30px;top:570px" width="14" height="14" viewBox="0 0 14 14"><circle cx="6.800" cy="2.600" r="1.900" fill="none" stroke="#666" stroke-width="1"/><circle cx="2.400" cy="11.200" r="1.800" fill="none" stroke="#666" stroke-width="1"/><circle cx="11.200" cy="11.200" r="1.800" fill="none" stroke="#666" stroke-width="1"/><path d="M6.800 4.500V7M2.400 9.400V7H11.200V9.400" fill="none" stroke="#666" stroke-width="1"/></svg>
<div class="dl abs" style="left:52px;top:569px">所属部门</div>
<div class="dt abs" style="left:118px;top:569px;color:#6b80f8">等于任意一个</div>
<svg class="abs" style="left:209px;top:574px" width="10" height="7" viewBox="0 0 10 7"><path d="M.9 1.200 5 5.300 9.100 1.200" fill="none" stroke="#6b80f8" stroke-width="1"/></svg>
<div class="dinp abs" style="top:598px"><span>所属部门</span><svg width="10" height="6" viewBox="0 0 10 6"><path d="M0 0H10L5 6z" fill="#b4b4b4"/></svg></div>
<svg class="abs" style="left:30px;top:670px" width="14" height="14" viewBox="0 0 14 14"><path d="M1.600 12.500V2.300a.8.800 0 0 1 .8-.8H7.400a.8.800 0 0 1 .8.800V12.500M8.200 6.300H11.200a.8.800 0 0 1 .8.800V12.500M0 12.500H13.500M3.600 4.300H6.200M3.600 6.600H6.200M10 8.600V10.600" fill="none" stroke="#666" stroke-width="1"/></svg>
<div class="dl abs" style="left:52px;top:669px">所属公司</div>
<div class="dt abs" style="left:118px;top:669px;color:#6b80f8">等于任意一个</div>
<svg class="abs" style="left:209px;top:674px" width="10" height="7" viewBox="0 0 10 7"><path d="M.9 1.200 5 5.300 9.100 1.200" fill="none" stroke="#6b80f8" stroke-width="1"/></svg>
<div class="dinp abs" style="top:698px"><span>所属公司</span><svg width="10" height="6" viewBox="0 0 10 6"><path d="M0 0H10L5 6z" fill="#b4b4b4"/></svg></div>
<svg class="abs" style="left:30px;top:770.5px" width="14" height="14" viewBox="0 0 14 14"><rect x=".5" y="2.200" width="12.500" height="10" rx=".8" fill="none" stroke="#666" stroke-width="1"/><path d="M.5 5.200H13M3.600 .6V3.200M9.900 .6V3.200" fill="none" stroke="#666" stroke-width="1"/><path d="M3 7.400H4.400M6 7.400H7.400M9 7.400H10.400M3 9.800H4.400M6 9.800H7.400M9 9.800H10.400" stroke="#666" stroke-width="1"/></svg>
<div class="dl abs" style="left:52px;top:769.5px">签约日期</div>
<div class="dt abs" style="left:118px;top:769.5px;color:#6b80f8">范围</div>
<svg class="abs" style="left:153px;top:774.5px" width="10" height="7" viewBox="0 0 10 7"><path d="M.9 1.200 5 5.300 9.100 1.200" fill="none" stroke="#6b80f8" stroke-width="1"/></svg>
<div id="vscroll" class="abs"><svg class="abs" style="left:6.500px;top:11px" width="12" height="6" viewBox="0 0 11 7" preserveAspectRatio="none"><path d="M0 7H11L5.500 0z" fill="#a3a3a3"/></svg><div id="vthumb" class="abs"></div><svg class="abs" style="left:6px;top:681px" width="12" height="6" viewBox="0 0 11 7" preserveAspectRatio="none"><path d="M0 0H11L5.500 7z" fill="#505050"/></svg></div>
<div id="dfl" class="abs"></div>
<div id="bfilter" class="abs">筛选</div>
<div id="breset" class="abs">重置</div>
<div id="bsave" class="abs">保存为常用</div>
</div>
<div id="topline" class="abs"></div>
<div id="toptab" class="abs"></div>
<div id="botline" class="abs"></div>
</body>
</html>
